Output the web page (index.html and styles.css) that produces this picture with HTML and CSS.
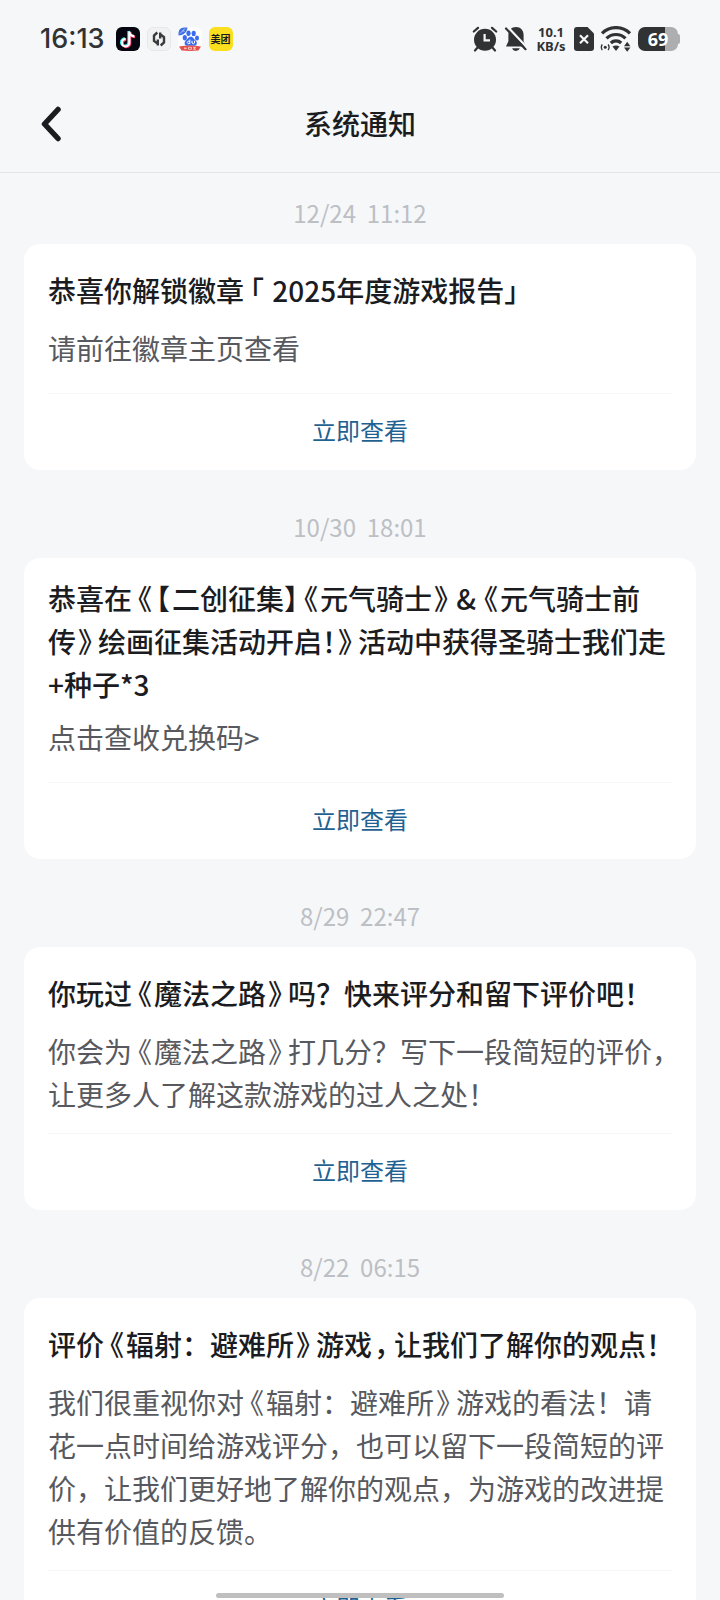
FILE: index.html
```html
<!DOCTYPE html>
<html lang="zh-CN">
<head>
<meta charset="utf-8">
<meta name="viewport" content="width=device-width, initial-scale=1">
<title>系统通知</title>
<link rel="stylesheet" href="styles.css">
</head>
<body>
<div class="app">
  <div class="status">
    <div class="status-left">
      <span class="clock">16:13</span>
      <div class="apps">
        <svg width="24" height="24" viewBox="0 0 24 24" aria-hidden="true">
          <rect width="24" height="24" rx="6" fill="#05060f"/>
          <g fill="none" stroke-width="2.6">
            <path d="M12.6 4v11.2a3.7 3.7 0 1 1-3.7-3.7M12.6 4c.3 3 2.3 4.7 5 4.9" stroke="#2ee6e0"/>
            <path d="M14 5v11.2a3.7 3.7 0 1 1-3.7-3.7M14 5c.3 3 2.3 4.7 5 4.9" stroke="#f5406a"/>
            <path d="M13.3 4.5v11.2a3.7 3.7 0 1 1-3.7-3.7M13.3 4.5c.3 3 2.3 4.7 5 4.9" stroke="#fff" stroke-width="2.2"/>
          </g>
        </svg>
        <svg width="24" height="24" viewBox="0 0 24 24" aria-hidden="true">
          <rect x=".5" y=".5" width="23" height="23" rx="5.5" fill="#f2f2f3" stroke="#e8e8ea"/>
          <g fill="none" stroke="#3a3b3e" stroke-width="2.4">
            <path d="M10.300 5.500L7 8.500V14l4.500 3.200M10.800 12.500v6"/>
            <path d="M13.700 18.500L17 15.500V10l-4.500-3.200M13.200 11.500v-6"/>
          </g>
        </svg>
        <svg width="24" height="24" viewBox="0 0 24 24" aria-hidden="true">
          <rect width="24" height="24" rx="6" fill="#fdfdff"/>
          <path d="M.5 6a6 6 0 0 1 5.5-5.500h3.500C9 5 6 8 .5 8.500z" fill="#3f6fe0"/>
          <path d="M2 6.500l5-5M4.500 3l2 2" stroke="#cfe0ff" stroke-width=".8"/>
          <g fill="#3a6cf0">
            <ellipse cx="6.800" cy="10.800" rx="2.100" ry="2.700"/>
            <ellipse cx="10.500" cy="6.300" rx="2.100" ry="2.700"/>
            <ellipse cx="15.700" cy="6.400" rx="2.100" ry="2.700"/>
            <ellipse cx="19" cy="11" rx="2" ry="2.600"/>
            <path d="M12.800 9.800c2.700 0 3 2.400 5 4 1.700 1.500 1.500 5-1.500 5H9.200c-3 0-3.200-3.500-1.500-5 2-1.600 2.400-4 5.100-4z"/>
          </g>
          <path d="M11.800 12.500v4.300M11.800 14.800a1.300 1.300 0 1 0 0 1.200M14 13.800v2.200q1.500 1.600 2.500 0v-2.200" fill="none" stroke="#fff"/>
          <path d="M1 19.500q11-2.200 22 0l-2.500 4.100q-8.500.8-17 0z" fill="#e4504c"/>
          <path d="M7 20.300v2M6 21.300h3M10.500 20.300h3v2h-3zM15 20.300h3M15 22.200h3M16.500 20.300v2" fill="none" stroke="#ffd9d2" stroke-width=".8"/>
        </svg>
        <span class="meituan">美团</span>
      </div>
    </div>
    <div class="status-right">
      <svg width="26" height="26" viewBox="0 0 26 26" aria-hidden="true">
        <path d="M1.800 5.500L6 1.800M24.200 5.500L20 1.800M6 21l-3 3.500M20 21l3 3.500" stroke="#303234" stroke-width="2.200" stroke-linecap="round"/>
        <circle cx="13" cy="13.800" r="11" fill="#303234"/>
        <path d="M12.600 8v6.300h5.400" fill="none" stroke="#f6f7f9" stroke-width="2.200"/>
      </svg>
      <svg width="24" height="26" viewBox="0 0 24 26" aria-hidden="true">
        <path d="M12 1c4.600 0 7.600 3.400 7.600 7.800v6.400l2.400 5.300H2l2.400-5.300V8.800C4.400 4.400 7.400 1 12 1z" fill="#303234"/>
        <path d="M8.200 22.300h7.600a4 4 0 0 1-7.600 0z" fill="#303234"/>
        <path d="M4.200 1.500L23 21.500" stroke="#f6f7f9" stroke-width="2.400"/>
        <path d="M2 2.500l19.500 20.700" stroke="#303234" stroke-width="2.200" stroke-linecap="round"/>
      </svg>
      <span class="speed"><span>10.1</span><span>KB/s</span></span>
      <svg width="20" height="24" viewBox="0 0 20 24" aria-hidden="true">
        <path d="M3 0h10.500L20 6.500V21a3 3 0 0 1-3 3H3a3 3 0 0 1-3-3V3a3 3 0 0 1 3-3z" fill="#303234"/>
        <path d="M6 8.200l8 8M14 8.200l-8 8" stroke="#f6f7f9" stroke-width="2.200"/>
      </svg>
      <svg width="32" height="26" viewBox="0 0 32 26" aria-hidden="true">
        <g fill="none" stroke="#303234" stroke-width="3.200">
          <path d="M2 7.300a20 20 0 0 1 28 0"/>
          <path d="M6.500 12.400a13.500 13.500 0 0 1 19 0"/>
          <path d="M10.800 17a7.600 7.600 0 0 1 10.400 0"/>
        </g>
        <path d="M12.500 20.500q3.500-1.800 7 0L16 25z" fill="#303234"/>
        <circle cx="5.200" cy="21.300" r="1.500" fill="#303234"/>
        <path d="M2.300 18.500q-2 2.800 0 5.600M8.100 18.500q2 2.800 0 5.600" fill="none" stroke="#303234" stroke-width="1.300"/>
        <path d="M24 20.200l3.200-4.400 3.200 4.400zM24 21.400l3.200 4.400 3.200-4.400z" fill="#303234"/>
      </svg>
      <span class="battery">69</span>
    </div>
  </div>

  <header class="topbar">
    <button class="back" type="button" aria-label="返回">
      <svg width="22" height="36" viewBox="0 0 22 36" aria-hidden="true">
        <path d="M18 3.500L4.500 18 18 32.500" fill="none" stroke="#1b1c1f" stroke-width="5.500" stroke-linecap="round" stroke-linejoin="round"/>
      </svg>
    </button>
    <h1>系统通知</h1>
  </header>

  <main class="feed">
    <section class="entry">
      <time class="stamp">12/24&nbsp; 11:12</time>
      <article class="card">
        <div class="head"><h2>恭喜你解锁徽章<span class="open">「</span> 2025年度游戏报告<span class="half">」</span></h2></div>
        <p class="text">请前往徽章主页查看</p>
        <a class="more" href="#">立即查看</a>
      </article>
    </section>
    <section class="entry">
      <time class="stamp">10/30&nbsp; 18:01</time>
      <article class="card">
        <div class="head"><h2>恭喜在<span class="open">《</span><span class="lens">【</span>二创征集<span class="half">】</span><span class="open">《</span>元气骑士<span class="close">》</span><span class="amp">&amp;</span><span class="open">《</span>元气骑士前传<span class="close">》</span>绘画征集活动开启<span class="half">！</span><span class="close">》</span>活动中获得圣骑士我们走+种子*3</h2></div>
        <p class="text">点击查收兑换码&gt;</p>
        <a class="more" href="#">立即查看</a>
      </article>
    </section>
    <section class="entry">
      <time class="stamp">8/29&nbsp; 22:47</time>
      <article class="card">
        <div class="head"><h2>你玩过<span class="open">《</span>魔法之路<span class="close">》</span>吗？快来评分和留下评价吧！</h2></div>
        <p class="text">你会为<span class="open">《</span>魔法之路<span class="close">》</span>打几分？写下一段简短的评价<span class="half">，</span>让更多人了解这款游戏的过人之处！</p>
        <a class="more" href="#">立即查看</a>
      </article>
    </section>
    <section class="entry">
      <time class="stamp">8/22&nbsp; 06:15</time>
      <article class="card">
        <div class="head"><h2>评价<span class="open">《</span>辐射：避难所<span class="close">》</span>游戏<span class="close">，</span>让我们了解你的观点<span class="half">！</span></h2></div>
        <p class="text">我们很重视你对<span class="open">《</span>辐射：避难所<span class="close">》</span>游戏的看法！请花一点时间给游戏评分，也可以留下一段简短的评价，让我们更好地了解你的观点，为游戏的改进提供有价值的反馈。</p>
        <a class="more" href="#">立即查看</a>
      </article>
    </section>
  </main>
  <div class="home-bar"></div>
</div>
</body>
</html>
```

FILE: styles.css
```css
* {
  box-sizing: border-box;
}

body {
  margin: 0;
  background: #f6f7f9;
  color: #1b1c1f;
  font-family: "Noto Sans CJK SC", "Noto Sans", sans-serif;
  text-spacing-trim: space-all;
}

h1,
h2,
p {
  margin: 0;
  font-size: 28px;
}

.app {
  display: flex;
  flex-direction: column;
  height: 100vh;
  overflow: hidden;
}

/* Status bar */
.status {
  flex: none;
  display: flex;
  align-items: center;
  justify-content: space-between;
  height: 77px;
  padding: 0 42px 0 40px;
  color: #303234;
}

.status-left,
.status-right,
.apps {
  display: flex;
  align-items: center;
}

.status-left {
  gap: 11px;
}

.apps {
  gap: 7px;
}

.clock {
  font: 500 27px/32px Inter, sans-serif;
}

.meituan {
  width: 24px;
  height: 24px;
  border-radius: 6px;
  background: #fbdf1e;
  color: #1b1c1f;
  font-size: 10px;
  font-weight: 700;
  line-height: 24px;
  text-align: center;
}

.status-right {
  gap: 6px;
}

.speed {
  display: flex;
  flex-direction: column;
  width: 34px;
  font: 700 13px/14px "Noto Sans", sans-serif;
  text-align: center;
}

.battery {
  position: relative;
  width: 40px;
  height: 24px;
  border-radius: 7px;
  background: linear-gradient(90deg, #303234 67%, #adaeb0 67%);
  color: #fff;
  font: 700 18px/24px "Noto Sans", sans-serif;
  text-align: center;
}

.battery::after {
  content: "";
  position: absolute;
  left: 100%;
  top: 7px;
  width: 2px;
  height: 10px;
  border-radius: 0 2px 2px 0;
  background: #adaeb0;
}

/* Title bar */
.topbar {
  flex: none;
  display: grid;
  grid-template-columns: 64px 1fr 64px;
  align-items: center;
  height: 96px;
  padding-bottom: 2px;
  border-bottom: 1px solid #e3e5e7;
}

.topbar h1 {
  font-weight: 500;
  line-height: 43px;
  text-align: center;
}

.back {
  display: flex;
  justify-content: flex-end;
  padding: 0 2px 0 0;
  border: 0;
  background: none;
}

/* Notification list */
.feed {
  flex: 1;
  min-height: 0;
  padding: 21px 24px 0;
  overflow-y: auto;
  scrollbar-width: none;
}

.entry {
  margin-bottom: 38px;
}

.stamp {
  display: block;
  margin-bottom: 12px;
  color: #bcbfc4;
  font-size: 24px;
  line-height: 38px;
  text-align: center;
}

.card {
  padding: 19px 24px 0;
  border-radius: 16px;
  background: #fff;
}

.head {
  display: flex;
  align-items: center;
  min-height: 54px;
  margin-bottom: 10px;
}

.head h2 {
  font-weight: 500;
  line-height: 43px;
}

.text {
  min-height: 49px;
  margin-bottom: 17px;
  color: #57595e;
  line-height: 43px;
}

.more {
  display: block;
  padding-bottom: 4px;
  border-top: 1px solid #f6f7f9;
  color: #1f6291;
  font-size: 24px;
  line-height: 72px;
  text-align: center;
  text-decoration: none;
}

/* Half-width punctuation with a little air on its outer side */
.half,
.open,
.close,
.lens {
  font-feature-settings: "halt";
}

.open {
  margin: 0 2px 0 6px;
}

.close {
  margin: 0 6px 0 2px;
}

.lens {
  margin: 0 2px;
}

.amp {
  margin: 0 2px;
}

.home-bar {
  position: fixed;
  bottom: 2px;
  left: 30%;
  width: 40%;
  height: 5px;
  border-radius: 3px;
  background: #bfbfbf;
}
```
